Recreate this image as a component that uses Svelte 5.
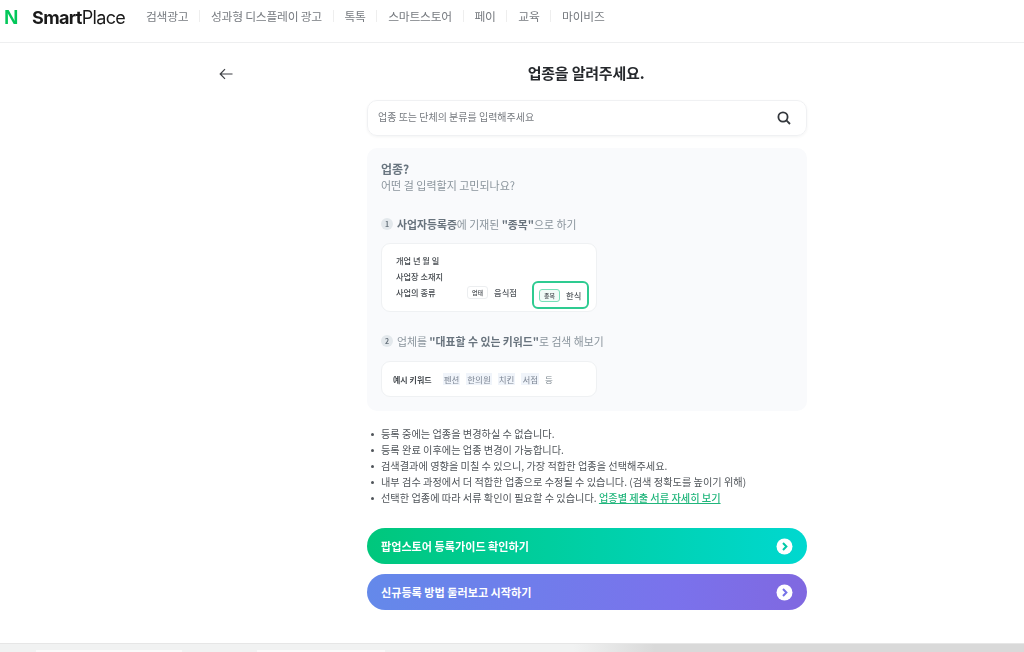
<script>
  const nav = ['검색광고', '성과형 디스플레이 광고', '톡톡', '스마트스토어', '페이', '교육', '마이비즈'];
  const keywords = ['펜션', '한의원', '치킨', '서점'];
  const notes = [
    '등록 중에는 업종을 변경하실 수 없습니다.',
    '등록 완료 이후에는 업종 변경이 가능합니다.',
    '검색결과에 영향을 미칠 수 있으니, 가장 적합한 업종을 선택해주세요.',
    '내부 검수 과정에서 더 적합한 업종으로 수정될 수 있습니다. (검색 정확도를 높이기 위해)'
  ];
</script>

<div class="page">
  <header>
    <span class="n">N</span>
    <span class="logo"><b>Smart</b>Place</span>
    <nav>
      {#each nav as item, i}
        {#if i > 0}<i class="sep"></i>{/if}
        <span>{item}</span>
      {/each}
    </nav>
  </header>

  <main>
    <div class="title-row">
      <svg class="back" width="14" height="12" viewBox="0 0 14 12" fill="none" stroke="#3c3f44" stroke-width="1.2">
        <path d="M13.5 6H1.2M6 1.2 1.2 6 6 10.8" />
      </svg>
      <h1>업종을 알려주세요.</h1>
    </div>

    <div class="column">
      <div class="search">
        <span>업종 또는 단체의 분류를 입력해주세요</span>
        <svg width="14" height="14" viewBox="0 0 14 14" fill="none" stroke="#33373c" stroke-width="1.8">
          <circle cx="6" cy="6" r="4.6" />
          <path d="m9.4 9.4 3.6 3.6" />
        </svg>
      </div>

      <section class="panel">
        <h2>업종?</h2>
        <p class="sub">어떤 걸 입력할지 고민되나요?</p>

        <p class="step one"><span class="num">1</span><span><b>사업자등록증</b>에 기재된 <b>"종목"</b>으로 하기</span></p>
        <div class="card license">
          <div class="lines">
            <span>개업 년 월 일</span>
            <span>사업장 소재지</span>
            <div class="kind">
              <span class="kind-label">사업의 종류</span>
              <span class="tag">업태</span>
              <span class="val">음식점</span>
              <span class="mark"><span class="tag green">종목</span><span class="val">한식</span></span>
            </div>
          </div>
        </div>

        <p class="step two"><span class="num">2</span><span>업체를 <b>"대표할 수 있는 키워드"</b>로 검색 해보기</span></p>
        <div class="card examples">
          <strong>예시 키워드</strong>
          {#each keywords as k}<span class="kw">{k}</span>{/each}
          <span class="etc">등</span>
        </div>
      </section>

      <ul>
        {#each notes as note}<li><span>{note}</span></li>{/each}
        <li><span>선택한 업종에 따라 서류 확인이 필요할 수 있습니다. <a href="#docs">업종별 제출 서류 자세히 보기</a></span></li>
      </ul>

      <div class="btn green-btn">
        <span>팝업스토어 등록가이드 확인하기</span>
        <svg width="17" height="17" viewBox="0 0 17 17"><circle cx="8.5" cy="8.5" r="8" fill="#fff" /><path d="m7 5 3.4 3.5L7 12" fill="none" stroke="#00c9a8" stroke-width="2" /></svg>
      </div>
      <div class="btn purple-btn">
        <span>신규등록 방법 둘러보고 시작하기</span>
        <svg width="17" height="17" viewBox="0 0 17 17"><circle cx="8.5" cy="8.5" r="8" fill="#fff" /><path d="m7 5 3.4 3.5L7 12" fill="none" stroke="#7672e8" stroke-width="2" /></svg>
      </div>
    </div>
  </main>

  <footer>
    <i class="f1"></i><i class="f2"></i>
  </footer>
</div>

<style>
  :global(body) {
    margin: 0;
    background: #fff;
  }
  .page {
    height: 652px;
    width: 1024px;
    overflow: hidden;
    display: flex;
    flex-direction: column;
    font-family: "Noto Sans CJK KR", "Noto Sans", sans-serif;
    color: #3d4248;
    filter: blur(0.4px);
  }
  header {
    height: 42px;
    flex: none;
    display: flex;
    align-items: center;
    border-bottom: 1px solid #eeeff0;
    box-sizing: content-box;
    padding-left: 4px;
  }
  .n {
    font: 700 20px "Liberation Sans", sans-serif;
    color: #03c75a;
    width: 28px;
    margin-top: -7px;
  }
  .logo {
    font: 400 18px "Inter", sans-serif;
    letter-spacing: -0.65px;
    color: #1a1a1a;
    width: 114px;
    margin-top: -7px;
  }
  .logo b {
    font-weight: 700;
  }
  nav {
    display: flex;
    align-items: center;
    font-size: 11.8px;
    letter-spacing: -0.25px;
    color: #777b80;
    margin-top: -11px;
  }
  .sep {
    width: 1px;
    height: 12px;
    background: #eeeeee;
    margin: 0 10.8px;
  }
  main {
    flex: 1;
    display: flex;
    flex-direction: column;
  }
  .title-row {
    margin-left: 219px;
    width: 734px;
    height: 57px;
    display: grid;
    grid-template-columns: 1fr auto 1fr;
    align-items: center;
  }
  .back {
    grid-column: 1;
    margin-top: 4px;
  }
  h1 {
    grid-column: 2;
    margin: 2px 0 0;
    font-size: 15px;
    font-weight: 700;
    letter-spacing: -0.2px;
    color: #26292d;
  }
  .column {
    width: 440px;
    margin-left: 367px;
    display: flex;
    flex-direction: column;
  }
  .search {
    height: 36px;
    box-sizing: border-box;
    border: 1px solid #f0f1f3;
    border-radius: 10px;
    box-shadow: 0 1px 3px rgba(20, 30, 40, 0.05);
    display: flex;
    justify-content: space-between;
    align-items: center;
    padding: 0 15px 0 10px;
    font-size: 10px;
    color: #777b80;
  }
  .search span {
    margin-top: -4px;
  }
  .panel {
    margin-top: 12px;
    height: 263px;
    box-sizing: border-box;
    background: #f9fafc;
    border-radius: 10px;
    padding: 13px 14px 0;
    color: #78838c;
  }
  h2 {
    margin: 0;
    font-size: 12px;
    line-height: 16px;
    font-weight: 700;
    color: #69757f;
  }
  .sub {
    margin: 0;
    font-size: 11px;
    line-height: 17px;
    color: #8a949c;
  }
  .step {
    margin: 0;
    display: flex;
    align-items: center;
    gap: 4px;
    font-size: 10.85px;
    line-height: 16px;
    color: #8a949c;
  }
  .step b {
    color: #68737d;
    font-weight: 700;
  }
  .one {
    margin-top: 22px;
  }
  .two {
    margin-top: 21px;
  }
  .num {
    width: 12px;
    height: 12px;
    border-radius: 50%;
    background: #e3e8ec;
    font-size: 7px;
    line-height: 12px;
    text-align: center;
    font-weight: 700;
    color: #68737d;
  }
  .card {
    width: 216px;
    box-sizing: border-box;
    background: #fff;
    border: 1px solid #eff1f3;
    border-radius: 9px;
    color: #44494e;
  }
  .license {
    margin-top: 11px;
    height: 69px;
    padding: 8px 0 0 14px;
    font-size: 8.2px;
    font-weight: 500;
  }
  .lines {
    display: flex;
    flex-direction: column;
    line-height: 16px;
  }
  .kind {
    display: flex;
    align-items: center;
    height: 16px;
    white-space: nowrap;
  }
  .kind-label {
    width: 71px;
    flex: none;
  }
  .tag {
    flex: none;
    font-size: 6px;
    line-height: 11px;
    padding: 0 4px;
    border: 1px solid #eceef0;
    border-radius: 3px;
    margin-right: 6px;
  }
  .val {
    flex: none;
    font-size: 8.3px;
    color: #555a5f;
  }
  .mark {
    margin: 6px 0 0 15px;
    height: 28px;
    width: 57px;
    box-sizing: border-box;
    border: 2px solid #2ecb91;
    border-radius: 6px;
    display: flex;
    align-items: center;
    padding-left: 5px;
    flex: none;
  }
  .tag.green {
    border-color: #79e0b9;
    background: #f0fbf7;
  }
  .examples {
    margin-top: 12px;
    height: 36px;
    display: flex;
    align-items: center;
    padding-left: 11px;
    font-size: 8px;
  }
  .examples strong {
    font-weight: 700;
    margin-right: 11px;
  }
  .kw {
    background: #f0f4fa;
    color: #7d8694;
    padding: 0 1px;
    font-size: 8.5px;
    line-height: 12px;
    margin-right: 6px;
  }
  .etc {
    color: #7d8790;
    font-size: 8.5px;
  }
  ul {
    margin: 15px 0 0;
    padding: 0 0 0 4px;
    list-style: none;
    font-size: 10.2px;
    line-height: 16px;
    color: #50555a;
  }
  li {
    display: flex;
    gap: 7px;
    white-space: nowrap;
  }
  li::before {
    content: "";
    width: 3px;
    height: 3px;
    border-radius: 50%;
    background: #50555a;
    margin-top: 7px;
    flex: none;
  }
  a {
    color: #21b67c;
    font-weight: 500;
  }
  .btn {
    height: 36px;
    border-radius: 18px;
    display: flex;
    align-items: center;
    justify-content: space-between;
    padding: 0 14px;
    color: #fff;
    font-size: 11.1px;
    font-weight: 700;
  }
  .green-btn {
    margin-top: 22px;
    background: linear-gradient(90deg, #00c77c, #00d8d0);
  }
  .purple-btn {
    margin-top: 10px;
    background: linear-gradient(90deg, #6489ea, #7a72ec 70%, #8068e0);
  }
  footer {
    height: 9px;
    box-sizing: border-box;
    flex: none;
    border-top: 1px solid #e6e6e6;
    background: linear-gradient(90deg, #f1f2f2 56%, #d9d9d9 64%);
    display: flex;
    align-items: flex-end;
  }
  footer i {
    display: block;
    height: 2px;
    background: #fafafa;
  }
  .f1 {
    width: 146px;
    margin-left: 36px;
  }
  .f2 {
    width: 128px;
    margin-left: 75px;
  }
</style>
